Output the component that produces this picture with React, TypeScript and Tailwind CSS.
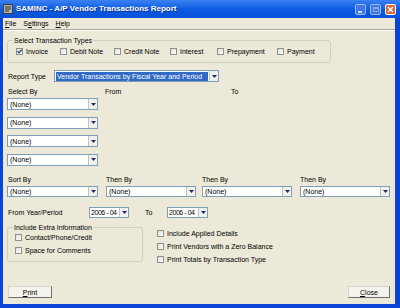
import React from 'react';

function Check({ label, checked = false, className = '' }: { label: string; checked?: boolean; className?: string }) {
  return (
    <div className={`flex items-center h-[8px] ${className}`}>
      <span className="relative w-[7px] h-[7px] shrink-0 border border-[#8e8f8f] bg-linear-to-br from-[#dcdcd7] to-white">
        {checked && (
          <svg viewBox="0 0 7 7" className="absolute -left-px -top-px w-[7px] h-[7px]">
            <path d="M1.5 3.2 L3 4.8 L5.8 1.6" fill="none" stroke="#1e3a63" strokeWidth="1.2" />
          </svg>
        )}
      </span>
      <span className="ml-[3px] text-[7px] leading-none text-black whitespace-nowrap">{label}</span>
    </div>
  );
}

function Combo({
  text,
  selected = false,
  tight = false,
  className = '',
}: {
  text: string;
  selected?: boolean;
  tight?: boolean;
  className?: string;
}) {
  return (
    <div className={`flex items-stretch border border-[#7f9db9] bg-white ${className}`}>
      <div className="flex-1 flex items-center pl-[1px] pr-[1px] overflow-hidden">
        <span
          className={`text-[7px] leading-none whitespace-nowrap py-[1px] ${tight ? 'px-0 tracking-[-0.45px]' : 'px-[1px]'} ${
            selected ? 'bg-[#316ac5] text-white w-full' : 'text-black'
          }`}
        >
          {text}
        </span>
      </div>
      <div className="w-[9px] shrink-0 flex items-center justify-center bg-[#f1f1ec] border-l border-[#c3c3bd]">
        <svg viewBox="0 0 5 3" className="w-[5px] h-[3px]">
          <path d="M0 0 H5 L2.5 3 Z" fill="#1d2a6b" />
        </svg>
      </div>
    </div>
  );
}

function TitleButton({ kind }: { kind: 'min' | 'max' | 'close' }) {
  if (kind === 'close') {
    return (
      <div className="w-[11px] h-[11px] rounded-[2px] border border-white bg-[#d8663f] flex items-center justify-center">
        <svg viewBox="0 0 7 7" className="w-[7px] h-[7px]">
          <path d="M1 1 L6 6 M6 1 L1 6" stroke="white" strokeWidth="1.4" />
        </svg>
      </div>
    );
  }
  return (
    <div className="w-[11px] h-[11px] rounded-[2px] border border-[#9cb9f2] bg-[#3f78e4] flex items-center justify-center">
      {kind === 'min' ? (
        <div className="w-[4px] h-[2px] bg-[#c8d8f7] mt-[5px] -ml-[2px]" />
      ) : (
        <div className="w-[6px] h-[5px] border border-[#8aa8ea] border-t-2" />
      )}
    </div>
  );
}

export default function App() {
  return (
    <div className="w-[400px] h-[308px] flex flex-col bg-[#0b45d6] font-['Liberation_Sans',Arial,sans-serif] overflow-hidden">
      {/* title bar */}
      <div className="h-[18px] shrink-0 flex items-center bg-linear-to-b from-[#3a82f2] via-[#0c5ce2] to-[#0a4fd8]">
        <svg viewBox="0 0 10 10" className="ml-[3px] w-[10px] h-[10px]">
          <rect x="0.5" y="0.5" width="9" height="9" fill="#b9b9b0" stroke="#3a3a3a" />
          <path d="M2 3 H8 M2 5 H8 M2 7 H6" stroke="#2a2a2a" strokeWidth="1" />
        </svg>
        <span className="ml-[3px] text-[8px] font-bold text-white leading-none [text-shadow:1px_1px_0_#0a2e8a]">
          SAMINC - A/P Vendor Transactions Report
        </span>
        <div className="ml-auto mr-[4px] flex gap-[4px]">
          <TitleButton kind="min" />
          <TitleButton kind="max" />
          <TitleButton kind="close" />
        </div>
      </div>

      <div className="flex-1 ml-[3px] mr-[5px] mb-[4px] bg-[#ece9d8] flex flex-col">
        {/* menu */}
        <div className="h-[11px] shrink-0 flex items-center pl-[2px] gap-[7px] text-[7px] leading-none text-black">
          <span><u>F</u>ile</span>
          <span>S<u>e</u>ttings</span>
          <span><u>H</u>elp</span>
        </div>
        <div className="h-[2px] shrink-0 border-t border-[#aca899] border-b border-b-white" />

        <div className="flex-1 flex flex-col pl-[4px] pr-[5px] pb-[6px] text-[7px] leading-none text-black">
          {/* transaction types */}
          <div className="relative mt-[9px] w-[324px] h-[23px] border border-[#d0d0bf] rounded-[3px] flex items-center pl-[8px]">
            <span className="absolute -top-[4px] left-[5px] px-[1px] bg-[#ece9d8]">Select Transaction Types</span>
            <Check label="Invoice" checked className="w-[44px]" />
            <Check label="Debit Note" className="w-[54px]" />
            <Check label="Credit Note" className="w-[56px]" />
            <Check label="Interest" className="w-[47px]" />
            <Check label="Prepayment" className="w-[60px]" />
            <Check label="Payment" />
          </div>

          {/* report type */}
          <div className="mt-[7px] flex items-center h-[12px]">
            <span className="w-[47px] pl-[1px]">Report Type</span>
            <Combo text="Vendor Transactions by Fiscal Year and Period" selected className="w-[165px] h-[12px]" />
          </div>

          {/* select by */}
          <div className="mt-[4px] h-[10px] flex items-center">
            <span className="w-[98px] pl-[1px]">Select By</span>
            <span className="w-[126px]">From</span>
            <span>To</span>
          </div>
          <div className="mt-[2px] flex flex-col gap-[6.5px]">
            <Combo text="(None)" className="w-[91px] h-[12px]" />
            <Combo text="(None)" className="w-[91px] h-[12px]" />
            <Combo text="(None)" className="w-[91px] h-[12px]" />
            <Combo text="(None)" className="w-[91px] h-[12px]" />
          </div>

          {/* sort by */}
          <div className="mt-[8.5px] h-[10px] flex items-center">
            <span className="w-[99px] pl-[1px]">Sort By</span>
            <span className="w-[96px]">Then By</span>
            <span className="w-[98px]">Then By</span>
            <span>Then By</span>
          </div>
          <div className="mt-[2px] flex">
            <Combo text="(None)" className="w-[91px] h-[11px]" />
            <Combo text="(None)" className="ml-[8px] w-[90px] h-[11px]" />
            <Combo text="(None)" className="ml-[6px] w-[90px] h-[11px]" />
            <Combo text="(None)" className="ml-[8px] w-[90px] h-[11px]" />
          </div>

          {/* year / period */}
          <div className="mt-[9.5px] flex items-center h-[11px]">
            <span className="w-[82px] pl-[1px]">From Year/Period</span>
            <Combo text="2006 - 04" tight className="w-[40px] h-[11px]" />
            <span className="ml-[16px] w-[22px]">To</span>
            <Combo text="2006 - 04" tight className="w-[41px] h-[11px]" />
          </div>

          {/* extra info + options */}
          <div className="mt-[9.5px] flex items-start">
            <div className="relative w-[136px] h-[35px] border border-[#d0d0bf] rounded-[3px] flex flex-col gap-[5px] pt-[5.5px] pl-[7px]">
              <span className="absolute -top-[4px] left-[5px] px-[1px] bg-[#ece9d8]">Include Extra Information</span>
              <Check label="Contact/Phone/Credit" />
              <Check label="Space for Comments" />
            </div>
            <div className="ml-[14px] pt-[2px] flex flex-col gap-[5px]">
              <Check label="Include Applied Details" />
              <Check label="Print Vendors with a Zero Balance" />
              <Check label="Print Totals by Transaction Type" />
            </div>
          </div>

          {/* buttons */}
          <div className="mt-auto flex justify-between">
            <button className="ml-[1px] w-[44px] h-[12px] bg-[#f4f3ee] border border-[#d6d5cc] border-r-[#6f6f6a] border-b-[#6f6f6a] text-[7px] leading-none">
              <u>P</u>rint
            </button>
            <button className="w-[42px] h-[12px] bg-[#f4f3ee] border border-[#d6d5cc] border-r-[#6f6f6a] border-b-[#6f6f6a] text-[7px] leading-none">
              <u>C</u>lose
            </button>
          </div>
        </div>
      </div>
    </div>
  );
}
